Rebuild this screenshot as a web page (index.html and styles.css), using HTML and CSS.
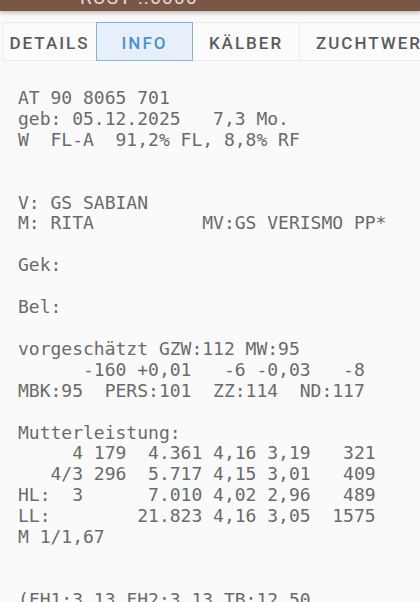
FILE: index.html
```html
<!DOCTYPE html>
<html lang="de">
<head>
<meta charset="utf-8">
<title>Info</title>
<link rel="stylesheet" href="styles.css">
</head>
<body>
<header class="appbar"><span class="appbar-title">RUSY :.0000</span></header>
<nav class="tabs">
  <div class="tab">DETAILS</div>
  <div class="tab tab-active">INFO</div>
  <div class="tab tab-kalb">KÄLBER</div>
  <div class="tab tab-zw">ZUCHTWERT</div>
</nav>
<pre class="info">AT 90 8065 701
geb: 05.12.2025   7,3 Mo.
W  FL-A  91,2% FL, 8,8% RF


V: GS SABIAN
M: RITA          MV:GS VERISMO PP*

Gek:

Bel:

vorgeschätzt GZW:112 MW:95
      -160 +0,01   -6 -0,03   -8
MBK:95  PERS:101  ZZ:114  ND:117

Mutterleistung:
     4 179  4.361 4,16 3,19   321
   4/3 296  5.717 4,15 3,01   409
HL:  3      7.010 4,02 2,96   489
LL:        21.823 4,16 3,05  1575
M 1/1,67


(FH1:3,13 FH2:3,13 TB:12,50</pre>
</body>
</html>
```
FILE: styles.css
```css
html, body {
  margin: 0;
  padding: 0;
  background: #fafafa;
  height: 602px;
  overflow: hidden;
}
body {
  font-family: Roboto, "Liberation Sans", sans-serif;
}
.appbar {
  height: 11px;
  background: #785747;
  overflow: hidden;
  box-shadow: 0 2px 4px rgba(90, 60, 50, 0.35);
  position: relative;
  z-index: 1;
}
.appbar-title {
  display: block;
  margin-top: -12px;
  padding-left: 80px;
  font-size: 19px;
  line-height: 20px;
  letter-spacing: 1.3px;
  color: #e6dcd7;
}
.tabs {
  display: flex;
  margin-top: 11px;
  padding-left: 2px;
  height: 39px;
  white-space: nowrap;
  overflow: hidden;
}
.tab {
  flex: 0 0 auto;
  box-sizing: border-box;
  height: 39px;
  display: flex;
  align-items: center;
  justify-content: center;
  padding-top: 2px;
  font-size: 17px;
  font-weight: 500;
  letter-spacing: 2px;
  color: #5b5b5b;
  background: #fbfbfb;
  border: 1px solid #ececec;
  border-right: none;
  width: 94px;
}
.tab:first-child {
  border-radius: 3px 0 0 3px;
}
.tab-active {
  width: 97px;
  background: #e7f0fa;
  border: 1px solid #86afdb;
  color: #4f8fd1;
}
.tab-kalb {
  width: 106px;
  border-left: none;
}
.tab-zw {
  width: 130px;
  justify-content: flex-start;
  padding-left: 16px;
}
.info {
  margin: 27px 0 0 18px;
  font-family: "DejaVu Sans Mono", "Liberation Mono", monospace;
  font-size: 18px;
  line-height: 20.9px;
  color: #6a6a6a;
}
```
